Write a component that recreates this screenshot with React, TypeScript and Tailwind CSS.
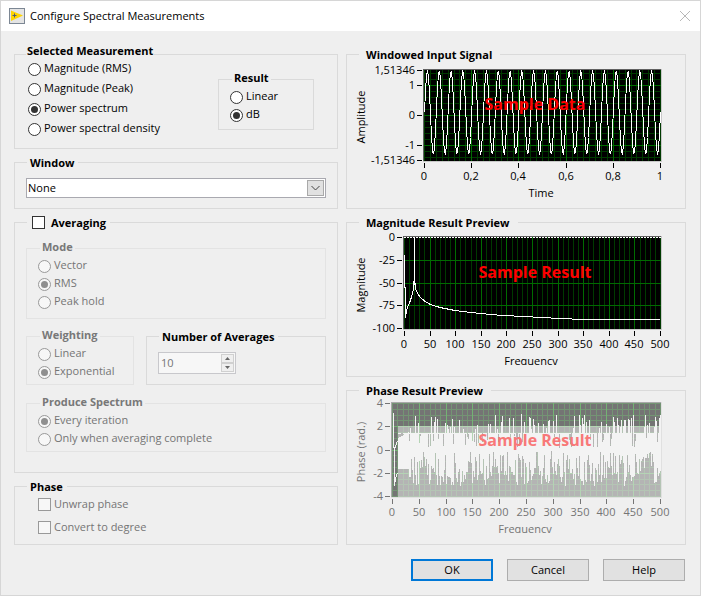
import { useId } from "react";
import type { ReactNode } from "react";
import { clsx } from "clsx";

/* ---------- form parts ---------- */

type LegendKind = "plain" | "raised" | "nested";

const legendStyle: Record<LegendKind, string> = {
  plain: "ml-3 pl-[3px] pr-1",
  raised: "ml-[11px] px-px pb-2",
  nested: "ml-[13px] px-[2px] pb-1",
};

function Group({
  title,
  kind = "plain",
  muted = false,
  className,
  children,
}: {
  title: ReactNode;
  kind?: LegendKind;
  muted?: boolean;
  className?: string;
  children: ReactNode;
}) {
  return (
    <fieldset className={clsx("min-w-0 border", muted ? "border-[#e3e3e3]" : "border-[#dadada]", className)}>
      <legend
        className={clsx(
          "text-[11px] leading-[13px] font-bold whitespace-nowrap",
          muted ? "text-[#787878]" : "text-black",
          legendStyle[kind],
        )}
      >
        {title}
      </legend>
      {children}
    </fieldset>
  );
}

function Radio({
  name,
  label,
  checked = false,
  disabled = false,
  tall = false,
}: {
  name: string;
  label: string;
  checked?: boolean;
  disabled?: boolean;
  tall?: boolean;
}) {
  return (
    <label
      className={clsx("flex items-center gap-[3px] whitespace-nowrap", tall ? "h-5" : "h-[18px]", disabled && "text-[#757575]")}
    >
      <input
        type="radio"
        name={name}
        defaultChecked={checked}
        disabled={disabled}
        className="grid size-[13px] shrink-0 appearance-none place-items-center rounded-full border border-[#333] bg-white before:size-[7px] before:rounded-full checked:before:bg-[#333] disabled:border-[#999] disabled:bg-[#f7f7f7] disabled:checked:before:bg-[#8f8f8f]"
      />
      <span className="pb-[2px] leading-4">{label}</span>
    </label>
  );
}

const boxStyle =
  "size-[13px] shrink-0 appearance-none border border-[#333] bg-white checked:bg-[#333] disabled:border-[#999] disabled:bg-[#f7f7f7]";

function Check({ label }: { label: string }) {
  return (
    <label className="flex h-[23px] items-center gap-[3px] text-[#757575]">
      <input type="checkbox" disabled className={boxStyle} />
      <span className="pb-[2px] leading-4">{label}</span>
    </label>
  );
}

/* ---------- charts ---------- */

type Tick = { at: number; text: string };

const TOP = 8;
const RIGHT = 313;

function Chart({
  left,
  top = TOP,
  bottom,
  xTicks,
  yTicks,
  xMinor,
  yMinor,
  xLabel,
  xLabelAt,
  yLabel,
  banner,
  faded = false,
  clipLabel = false,
  children,
}: {
  left: number;
  top?: number;
  bottom: number;
  xTicks: Tick[];
  yTicks: Tick[];
  xMinor: number[];
  yMinor: number[];
  xLabel: string;
  xLabelAt: number;
  yLabel: string;
  banner: string;
  faded?: boolean;
  clipLabel?: boolean;
  children: ReactNode;
}) {
  const id = useId();
  const ink = faded ? "#757575" : "#000";
  const major = faded ? "#74b274" : "#006b00";
  const minor = faded ? "#749474" : "#003a00";
  const width = RIGHT - left;
  const height = bottom - top;
  const middle = Math.round((top + bottom) / 2) + 2;
  return (
    <svg viewBox="0 0 338 147" className="block w-full overflow-visible" role="img" aria-label={`${yLabel} / ${xLabel}`} fontSize="11">
      <defs>
        <clipPath id={`${id}p`}>
          <rect x={left} y={top} width={width + 1} height={height + 1} />
        </clipPath>
        <clipPath id={`${id}l`}>
          <rect x="0" y="120" width="338" height={clipLabel ? 16 : 27} />
        </clipPath>
      </defs>
      <g shapeRendering="crispEdges">
        <rect x={left - 1} y={top - 1} width={width + 3} height={height + 3} fill={faded ? "#e0e0e0" : "#c8c8c8"} />
        <rect x={left - 1} y={top - 1} width={width + 2} height={height + 2} fill={faded ? "#a8a8a8" : "#606060"} />
        <rect x={left} y={top} width={width + 1} height={height + 1} fill={faded ? "#747474" : "#000"} />
        <g fill={minor}>
          {xMinor.map((x) => (
            <rect key={x} x={Math.round(x)} y={top} width="1" height={height + 1} />
          ))}
          {yMinor.map((y) => (
            <rect key={y} x={left} y={Math.round(y)} width={width + 1} height="1" />
          ))}
        </g>
        <g fill={major}>
          {xTicks.slice(1, -1).map((t) => (
            <rect key={t.at} x={t.at} y={top} width="1" height={height + 1} />
          ))}
          {yTicks.slice(1, -1).map((t) => (
            <rect key={t.at} x={left} y={t.at} width={width + 1} height="1" />
          ))}
        </g>
        <g clipPath={`url(#${id}p)`}>{children}</g>
        <g fill={ink}>
          {xTicks.map((t) => (
            <rect key={t.at} x={t.at} y={bottom + 3} width="1" height="5" />
          ))}
          {yTicks.map((t) => (
            <rect key={t.at} x={left - 7} y={t.at} width="5" height="1" />
          ))}
        </g>
      </g>
      <g fill={ink}>
        {xTicks.map((t) => (
          <text key={t.at} x={t.at} y={bottom + 20} textAnchor="middle">
            {t.text}
          </text>
        ))}
        {yTicks.map((t) => (
          <text key={t.at} x={left - 9} y={t.at + 4} textAnchor="end">
            {t.text}
          </text>
        ))}
        <text x={xLabelAt} y="136" textAnchor="middle" clipPath={`url(#${id}l)`}>
          {xLabel}
        </text>
        <text transform={`translate(18 ${middle}) rotate(-90)`} textAnchor="middle">
          {yLabel}
        </text>
      </g>
      <text x="188" y="49" textAnchor="middle" fontSize="16" fontWeight="700" fill={faded ? "#f87878" : "#f00"}>
        {banner}
      </text>
    </svg>
  );
}

const steps = (from: number, to: number, count: number) =>
  Array.from({ length: count + 1 }, (_, i) => from + ((to - from) * i) / count);

const xAxis = (left: number, texts: string[]): Tick[] =>
  texts.map((text, i) => ({ text, at: Math.round(left + ((RIGHT - left) * i) / (texts.length - 1)) }));

const hertz = ["0", "50", "100", "150", "200", "250", "300", "350", "400", "450", "500"];

function SignalChart() {
  const left = 77;
  const wave = steps(0, 1, 236)
    .map((t) => `${left + 0.5 + t * 236},${(54.5 - 30 * (0.1 + 1.4 * Math.sin(2 * Math.PI * 20 * t))).toFixed(1)}`)
    .join(" ");
  return (
    <Chart
      left={left}
      top={9}
      bottom={99}
      xTicks={xAxis(left, ["0", "0,2", "0,4", "0,6", "0,8", "1"])}
      yTicks={[
        { at: 9, text: "1,51346" },
        { at: 24, text: "1" },
        { at: 54, text: "0" },
        { at: 84, text: "-1" },
        { at: 99, text: "-1,51346" },
      ]}
      xMinor={steps(left, RIGHT, 40)}
      yMinor={steps(12, 96, 14)}
      xLabel="Time"
      xLabelAt={194}
      yLabel="Amplitude"
      banner="Sample Data"
    >
      <polyline points={wave} fill="none" stroke="#fff" strokeWidth="1" />
    </Chart>
  );
}

function MagnitudeChart() {
  const left = 57;
  return (
    <Chart
      left={left}
      bottom={99}
      xTicks={xAxis(left, hertz)}
      yTicks={[
        { at: 8, text: "0" },
        { at: 31, text: "-25" },
        { at: 54, text: "-50" },
        { at: 76, text: "-75" },
        { at: 99, text: "-100" },
      ]}
      xMinor={steps(left, RIGHT, 50)}
      yMinor={[]}
      xLabel="Frequency"
      xLabelAt={184}
      yLabel="Magnitude"
      banner="Sample Result"
      clipLabel
    >
      <path d={`M${left} 8.5H314`} stroke="#fff" strokeDasharray="2 1" />
      <rect x="67" y="8" width="1" height="48" fill="#fff" />
      <polyline
        points="57.5,26 57.5,58 58.5,58 58.5,89 59.5,82 60.5,78 62.5,74 64.5,68 65.5,64 66.5,60 66.5,52"
        fill="none"
        stroke="#fff"
      />
      <polyline
        points="68.5,54 68.5,60 70.5,64 73,68 78,72.5 83.5,75.5 93,78.5 108,81.5 120,83 133,84.5 155,86.5 178,87.5 193,88.5 215,89.5 235,90.5 313,90.5"
        fill="none"
        stroke="#fff"
      />
    </Chart>
  );
}

/* Wrapped phase is noise-like, so the trace is drawn as one column per pixel. */
function phaseColumns() {
  let seed = 29;
  const random = () => {
    seed = (seed * 16807) % 2147483647;
    return seed / 2147483647;
  };
  const columns: { x: number; high: number; low: number }[] = [];
  for (let x = 51; x <= 313; x++) {
    const start = x < 62;
    const swell = 0.12 * Math.sin(x / 7);
    const a = random() + swell;
    const b = random() + swell;
    const high = start ? 1.6 - (62 - x) * 0.05 : a > 0.7 ? 1.8 + random() * 1.3 : a < 0.16 ? 0.2 + random() * 1 : 1.5;
    const low = start ? -1.6 : b > 0.55 ? -2 - random() * 1.1 : b < 0.28 ? -0.1 - random() * 1.1 : -1.3 - random() * 0.9;
    columns.push({ x, high, low });
  }
  return columns;
}

const phaseTrace = phaseColumns();

function PhaseChart() {
  const left = 45;
  const y = (v: number) => 53 - v * 11.6;
  return (
    <Chart
      left={left}
      top={6}
      bottom={99}
      xTicks={xAxis(left, hertz)}
      yTicks={[
        { at: 6, text: "4" },
        { at: 29, text: "2" },
        { at: 53, text: "0" },
        { at: 76, text: "-2" },
        { at: 99, text: "-4" },
      ]}
      xMinor={steps(left, RIGHT, 50)}
      yMinor={steps(6, 99, 16)}
      xLabel="Frequency"
      xLabelAt={178}
      yLabel="Phase (rad.)"
      banner="Sample Result"
      faded
      clipLabel
    >
      <rect x="51" y="29" width="263" height="71" fill="#f3f3f3" fillOpacity="0.5" />
      <path d="M51 36.5H314" stroke="#f3f3f3" strokeDasharray="3 2" />
      <polyline points="46.5,16 46.5,50 47.5,50 47.5,89 48.5,82 49.5,78 50.5,76" fill="none" stroke="#f3f3f3" />
      <polyline points="47.5,50 48.5,50 49.5,46 50.5,44" fill="none" stroke="#f3f3f3" />
      {phaseTrace.map((c) => (
        <rect key={c.x} x={c.x} y={y(c.high)} width="1" height={y(c.low) - y(c.high)} fill="#f3f3f3" />
      ))}
    </Chart>
  );
}

/* ---------- dialog ---------- */

function DialogButton({ children, primary = false }: { children: ReactNode; primary?: boolean }) {
  return (
    <button
      type="button"
      className={clsx(
        "flex h-[22px] w-[82px] items-center justify-center bg-[#e1e1e1]",
        primary ? "border-2 border-[#0078d7]" : "border border-[#adadad]",
      )}
    >
      {children}
    </button>
  );
}

export default function App() {
  return (
    <div className="min-h-screen border border-[#d6d6d6] bg-[#efefef] font-['Open_Sans','Noto_Sans',sans-serif] text-[11px] leading-4 text-black">
      <header className="flex h-[30px] items-center bg-white pr-2.5 pl-2">
        <svg viewBox="0 0 16 16" className="size-4 shrink-0" aria-hidden="true">
          <rect x="0.5" y="0.5" width="15" height="15" fill="#e4e4e4" stroke="#7c8794" />
          <path d="M2 2.5L14 7.5L2 13Z" fill="#ffd500" />
          <path d="M3.5 7.5H7.5M5.5 5.5V9.5" stroke="#4c5a78" />
        </svg>
        <h1 className="ml-[5px] flex-1">Configure Spectral Measurements</h1>
        <button type="button" aria-label="Close">
          <svg viewBox="0 0 10 10" className="size-2.5" aria-hidden="true">
            <path d="M0 0L10 10M10 0L0 10" stroke="#b8b8b8" fill="none" />
          </svg>
        </button>
      </header>

      <main className="pt-[13px] pr-[14px] pb-[14px] pl-[13px]">
        <div className="grid grid-cols-[324fr_340fr] gap-2">
          <div className="flex min-w-0 flex-col gap-[7px]">
            <Group title="Selected Measurement" kind="raised" className="pb-[9px]">
              <div className="-mt-1.5 flex items-start justify-between pr-[23px] pl-[13px]">
                <div>
                  <Radio tall name="measurement" label="Magnitude (RMS)" />
                  <Radio tall name="measurement" label="Magnitude (Peak)" />
                  <Radio tall name="measurement" label="Power spectrum" checked />
                  <Radio tall name="measurement" label="Power spectral density" />
                </div>
                <Group title="Result" kind="nested" className="mt-3 w-24 pb-[5px]">
                  <div className="pl-[11px]">
                    <Radio name="result" label="Linear" />
                    <Radio name="result" label="dB" checked />
                  </div>
                </Group>
              </div>
            </Group>

            <Group title={<span id="window-title">Window</span>}>
              <div className="relative mx-[11px] mt-[9px] mb-2.5">
                <select
                  aria-labelledby="window-title"
                  defaultValue="None"
                  className="block h-5 w-full appearance-none border border-[#a9a9b0] bg-white pl-px leading-4"
                >
                  <option>None</option>
                </select>
                <span className="pointer-events-none absolute inset-y-0.5 right-0.5 grid w-[17px] place-items-center border border-[#a9a9a9] bg-[#e1e1e1]">
                  <svg viewBox="0 0 9 6" className="h-1.5 w-[9px]" aria-hidden="true">
                    <path d="M0.5 1L4.5 5L8.5 1" fill="none" stroke="#444" />
                  </svg>
                </span>
              </div>
            </Group>

            <Group
              className="pb-5"
              title={
                <label className="flex items-center gap-1.5 pl-0.5">
                  <input type="checkbox" className={boxStyle} />
                  Averaging
                </label>
              }
            >
              <div className="px-[11px] pt-[11px]">
                <Group title="Mode" kind="nested" muted className="pb-[7px]">
                  <div className="pl-[11px]">
                    <Radio disabled name="mode" label="Vector" />
                    <Radio disabled name="mode" label="RMS" checked />
                    <Radio disabled name="mode" label="Peak hold" />
                  </div>
                </Group>

                <div className="mt-[9px] flex gap-3">
                  <Group title="Weighting" kind="nested" muted className="w-[108px] pb-[3px]">
                    <div className="pl-[11px]">
                      <Radio disabled name="weighting" label="Linear" />
                      <Radio disabled name="weighting" label="Exponential" checked />
                    </div>
                  </Group>
                  <Group title={<span id="count-title">Number of Averages</span>} className="mt-0.5 flex-1">
                    <div className="mt-[9px] mb-2.5 ml-[11px] flex h-[22px] w-[78px] border border-[#c8c8cc] bg-[#f7f7f7] text-[#757575]">
                      <input
                        type="text"
                        inputMode="numeric"
                        aria-labelledby="count-title"
                        defaultValue="10"
                        disabled
                        className="min-w-0 flex-1 pl-0.5"
                      />
                      <div className="flex w-[14px] flex-col py-px pr-px">
                        <button type="button" disabled aria-label="Increase" className="grid flex-1 place-items-center border border-[#d0d0d0] bg-[#efefef]">
                          <svg viewBox="0 0 5 3" className="h-[3px] w-[5px]" aria-hidden="true">
                            <path d="M0 3L2.5 0L5 3Z" fill="#666" />
                          </svg>
                        </button>
                        <button type="button" disabled aria-label="Decrease" className="grid flex-1 place-items-center border border-[#d0d0d0] bg-[#efefef]">
                          <svg viewBox="0 0 5 3" className="h-[3px] w-[5px]" aria-hidden="true">
                            <path d="M0 0L2.5 3L5 0Z" fill="#666" />
                          </svg>
                        </button>
                      </div>
                    </div>
                  </Group>
                </div>

                <Group title="Produce Spectrum" kind="nested" muted className="mt-2.5 pb-[3px]">
                  <div className="pl-[11px]">
                    <Radio disabled name="produce" label="Every iteration" checked />
                    <Radio disabled name="produce" label="Only when averaging complete" />
                  </div>
                </Group>
              </div>
            </Group>

            <Group title="Phase" className="pb-[5px]">
              <div className="pl-[23px]">
                <Check label="Unwrap phase" />
                <Check label="Convert to degree" />
              </div>
            </Group>
          </div>

          <div className="flex min-w-0 flex-col gap-[7px] pt-1">
            <Group title={<span className="px-1">Windowed Input Signal</span>}>
              <SignalChart />
            </Group>
            <Group title={<span className="px-1">Magnitude Result Preview</span>}>
              <MagnitudeChart />
            </Group>
            <Group title={<span className="px-1">Phase Result Preview</span>}>
              <PhaseChart />
            </Group>
          </div>
        </div>

        <div className="mt-[14px] flex justify-end gap-[14px] pr-px">
          <DialogButton primary>OK</DialogButton>
          <DialogButton>Cancel</DialogButton>
          <DialogButton>Help</DialogButton>
        </div>
      </main>
    </div>
  );
}
